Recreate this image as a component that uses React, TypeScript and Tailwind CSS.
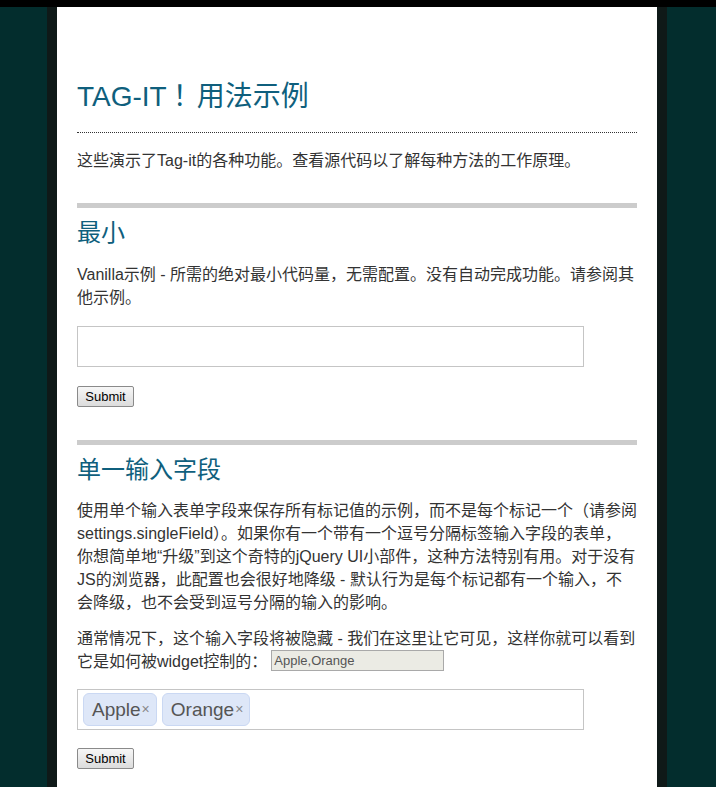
import React from "react";

const font = "font-['Liberation_Sans','Noto_Sans_CJK_SC',sans-serif]";

function SubmitButton() {
  return (
    <button
      type="button"
      className="block h-[21px] w-[57px] rounded-[2px] border border-[#8a8a8a] bg-gradient-to-b from-[#f7f7f7] to-[#dcdcdc] text-[13px] leading-[19px] text-black font-['Liberation_Sans',sans-serif]"
    >
      Submit
    </button>
  );
}

function Tag({ label }: { label: string }) {
  return (
    <span className="flex h-[33px] items-center rounded-[6px] border border-[#cad8f3] bg-[#dee7f8] pl-[8px] pr-[6px] text-[19px] text-[#555] font-['Liberation_Sans',sans-serif]">
      <span>{label}</span>
      <span className="ml-[1px] text-[14px] text-[#888]">×</span>
    </span>
  );
}

export default function App() {
  return (
    <div className={`min-h-screen bg-[#032d2d] ${font}`}>
      <div className="h-[7px] bg-black" />
      <div className="ml-[47px] w-[620px] border-x-[10px] border-[#0f1918] bg-white px-5 pb-10 pt-[73px] text-[16px] leading-[23px] text-[#333]">
        <h1 className="border-b border-dotted border-[#333] pb-[18px] text-[28px] leading-[34px] text-[#0f5f7d]">
          TAG-IT<span className="inline-block w-[30px] whitespace-nowrap pl-[6px]">！</span>用法示例
        </h1>
        <p className="mt-[16px]">这些演示了Tag-it的各种功能。查看源代码以了解每种方法的工作原理。</p>

        <div className="mt-[31px] h-[5px] bg-[#cccccc]" />
        <h2 className="mt-[10px] text-[24px] leading-[30px] text-[#0f5f7d]">最小</h2>
        <p className="mt-[15px]">
          Vanilla示例 - 所需的绝对最小代码量，无需配置。没有自动完成功能。请参阅其他示例。
        </p>
        <div className="mt-[17px] h-[41px] w-[507px] border border-[#c5c5c5]" />
        <div className="mt-[19px]">
          <SubmitButton />
        </div>

        <div className="mt-[33px] h-[5px] bg-[#cccccc]" />
        <h2 className="mt-[10px] text-[24px] leading-[30px] text-[#0f5f7d]">单一输入字段</h2>
        <p className="mt-[14px]">
          使用单个输入表单字段来保存所有标记值的示例，而不是每个标记一个（请参阅settings.singleField）。如果你有一个带有一个逗号分隔标签输入字段的表单，你想简单地“升级”到这个奇特的jQuery
          UI小部件，这种方法特别有用。对于没有JS的浏览器，此配置也会很好地降级 - 默认行为是每个标记都有一个输入，不会降级，也不会受到逗号分隔的输入的影响。
        </p>
        <p className="mt-[13px]">
          通常情况下，这个输入字段将被隐藏 - 我们在这里让它可见，这样你就可以看到它是如何被widget控制的：
          <span className="ml-[4px] inline-block h-[21px] w-[173px] border border-[#a9a9a9] bg-[#ebebe4] px-[2px] align-top text-[13px] leading-[19px] text-[#555] font-['Liberation_Sans',sans-serif]">
            Apple,Orange
          </span>
        </p>
        <div className="mt-[16px] flex h-[41px] w-[507px] items-center gap-[5px] border border-[#c5c5c5] px-[5px]">
          <Tag label="Apple" />
          <Tag label="Orange" />
        </div>
        <div className="mt-[18px]">
          <SubmitButton />
        </div>
      </div>
    </div>
  );
}
